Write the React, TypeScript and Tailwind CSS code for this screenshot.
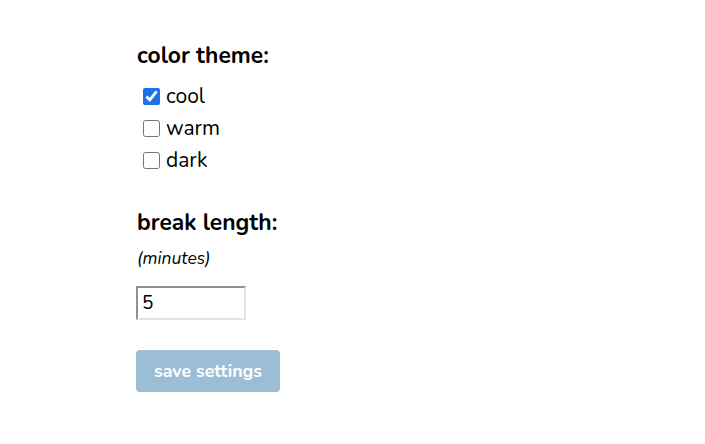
export default function App() {
  return (
    <div className="min-h-screen bg-white font-['Nunito','Lato','Open_Sans',sans-serif] text-black">
      <div className="pl-[136px] pt-[42px]">
        <h2 className="pl-px text-[22.8px] font-bold leading-[28px]">color theme:</h2>
        <div className="mt-[10px] flex flex-col pl-[7px]">
          {['cool', 'warm', 'dark'].map((t, i) => (
            <label key={t} className="flex h-[32px] items-center gap-[6px] text-[21px]">
              <input
                type="checkbox"
                defaultChecked={i === 0}
                className="m-0 h-[17px] w-[17px] accent-[#1a73e8]"
              />
              <span className="leading-none">{t}</span>
            </label>
          ))}
        </div>

        <h2 className="mt-[33px] pl-px text-[22.8px] font-bold leading-[28px]">break length:</h2>
        <p className="mt-[10px] pl-px text-[17.5px] italic leading-[22px]">(minutes)</p>
        <input
          type="text"
          defaultValue="5"
          className="mt-[17px] block h-[34px] w-[110px] border-2 border-t-[#8f8f8f] border-l-[#8f8f8f] border-r-[#e3e3e3] border-b-[#e3e3e3] px-[4px] text-[19px] outline-none"
        />
        <button className="mt-[30px] h-[42px] w-[144px] rounded-[4px] bg-[#9bbed6] text-[17.8px] font-bold text-white">
          save settings
        </button>
      </div>
    </div>
  )
}
